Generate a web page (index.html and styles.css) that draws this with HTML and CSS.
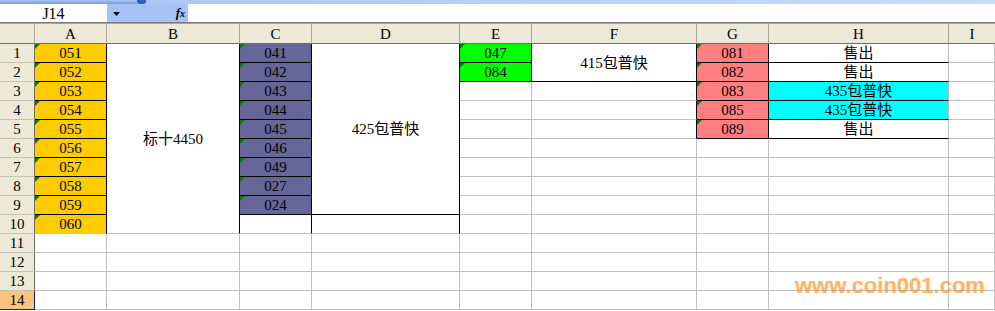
FILE: index.html
```html
<!DOCTYPE html>
<html lang="zh-CN">
<head>
<meta charset="UTF-8">
<title>Sheet1</title>
<link rel="stylesheet" href="styles.css">
</head>
<body>
    <div class="toolbar-edge"><span class="edge-dark"></span><span class="edge-knob"></span></div>
    <div class="formula-bar">
        <div class="name-box">J14</div>
        <div class="fx-zone">
            <svg class="drop" width="7" height="4" viewBox="0 0 7 4"><polygon points="0,0 7,0 3.5,4" fill="#000"/></svg>
            <span class="fx"><i>f<small>x</small></i></span>
        </div>
        <div class="formula-input"></div>
    </div>

    <div class="sheet">
        <!-- column headers -->
        <div class="h corner"></div>
        <div class="h">A</div>
        <div class="h">B</div>
        <div class="h">C</div>
        <div class="h">D</div>
        <div class="h">E</div>
        <div class="h">F</div>
        <div class="h">G</div>
        <div class="h">H</div>
        <div class="h last">I</div>

        <!-- row 1 -->
        <div class="r">1</div>
        <div class="c gold tri bk-r bk-b">051</div>
        <div class="c span10 bk-r">标十4450</div>
        <div class="c slate tri bk-r bk-b">041</div>
        <div class="c span9 bk-r bk-b">425包普快</div>
        <div class="c lime tri bk-r bk-b">047</div>
        <div class="c span2 bk-r bk-b">415包普快</div>
        <div class="c rose tri bk-r bk-b">081</div>
        <div class="c bk-b">售出</div>
        <div class="c"></div>

        <!-- row 2 -->
        <div class="r">2</div>
        <div class="c gold tri bk-r bk-b">052</div>
        <div class="c slate tri bk-r bk-b">042</div>
        <div class="c lime tri bk-r bk-b">084</div>
        <div class="c rose tri bk-r bk-b">082</div>
        <div class="c bk-b">售出</div>
        <div class="c"></div>

        <!-- row 3 -->
        <div class="r">3</div>
        <div class="c gold tri bk-r bk-b">053</div>
        <div class="c slate tri bk-r bk-b">043</div>
        <div class="c"></div>
        <div class="c bk-r"></div>
        <div class="c rose tri bk-r bk-b">083</div>
        <div class="c cyan bk-b">435包普快</div>
        <div class="c"></div>

        <!-- row 4 -->
        <div class="r">4</div>
        <div class="c gold tri bk-r bk-b">054</div>
        <div class="c slate tri bk-r bk-b">044</div>
        <div class="c"></div>
        <div class="c bk-r"></div>
        <div class="c rose tri bk-r bk-b">085</div>
        <div class="c cyan bk-b">435包普快</div>
        <div class="c"></div>

        <!-- row 5 -->
        <div class="r">5</div>
        <div class="c gold tri bk-r bk-b">055</div>
        <div class="c slate tri bk-r bk-b">045</div>
        <div class="c"></div>
        <div class="c bk-r"></div>
        <div class="c rose tri bk-r bk-b">089</div>
        <div class="c bk-b">售出</div>
        <div class="c"></div>

        <!-- row 6 -->
        <div class="r">6</div>
        <div class="c gold tri bk-r bk-b">056</div>
        <div class="c slate tri bk-r bk-b">046</div>
        <div class="c"></div>
        <div class="c"></div>
        <div class="c"></div>
        <div class="c"></div>
        <div class="c"></div>

        <!-- row 7 -->
        <div class="r">7</div>
        <div class="c gold tri bk-r bk-b">057</div>
        <div class="c slate tri bk-r bk-b">049</div>
        <div class="c"></div>
        <div class="c"></div>
        <div class="c"></div>
        <div class="c"></div>
        <div class="c"></div>

        <!-- row 8 -->
        <div class="r">8</div>
        <div class="c gold tri bk-r bk-b">058</div>
        <div class="c slate tri bk-r bk-b">027</div>
        <div class="c"></div>
        <div class="c"></div>
        <div class="c"></div>
        <div class="c"></div>
        <div class="c"></div>

        <!-- row 9 -->
        <div class="r">9</div>
        <div class="c gold tri bk-r bk-b">059</div>
        <div class="c slate tri bk-r bk-b">024</div>
        <div class="c"></div>
        <div class="c"></div>
        <div class="c"></div>
        <div class="c"></div>
        <div class="c"></div>

        <!-- row 10 -->
        <div class="r">10</div>
        <div class="c gold tri bk-r">060</div>
        <div class="c bk-r"></div>
        <div class="c bk-r"></div>
        <div class="c"></div>
        <div class="c"></div>
        <div class="c"></div>
        <div class="c"></div>
        <div class="c"></div>

        <!-- rows 11-14 -->
        <div class="r">11</div>
        <div class="c"></div><div class="c"></div><div class="c"></div><div class="c"></div><div class="c"></div><div class="c"></div><div class="c"></div><div class="c"></div><div class="c"></div>
        <div class="r">12</div>
        <div class="c"></div><div class="c"></div><div class="c"></div><div class="c"></div><div class="c"></div><div class="c"></div><div class="c"></div><div class="c"></div><div class="c"></div>
        <div class="r">13</div>
        <div class="c"></div><div class="c"></div><div class="c"></div><div class="c"></div><div class="c"></div><div class="c"></div><div class="c"></div><div class="c"></div><div class="c"></div>
        <div class="r active">14</div>
        <div class="c"></div><div class="c"></div><div class="c"></div><div class="c"></div><div class="c"></div><div class="c"></div><div class="c"></div><div class="c"></div><div class="c"></div>
    </div>

    <div class="watermark">www.coin001.com</div>
</body>
</html>
```

FILE: styles.css
```css
* {
    box-sizing: border-box;
}
body {
    margin: 0;
    padding: 0;
    width: 995px;
    height: 311px;
    overflow: hidden;
    background-color: #fff;
    font-family: "Liberation Serif", "Noto Sans CJK SC", serif;
    font-size: 15px;
    color: #000;
    position: relative;
}

/* top strip left from the toolbar */
.toolbar-edge {
    height: 4px;
    background: linear-gradient(90deg, #a9c3f3, #c7dbf8);
    display: flex;
}
.toolbar-edge .edge-dark {
    width: 137px;
    height: 4px;
    background: linear-gradient(#a8c2f2, #7c9be0);
}
.toolbar-edge .edge-knob {
    width: 9px;
    height: 4px;
    background-color: #2f5fc4;
    border-radius: 0 0 3px 3px;
}

/* name box + formula */
.formula-bar {
    height: 19px;
    display: flex;
    border-bottom: 1px solid #7a7a7a;
}
.name-box {
    width: 107px;
    background-color: #fff;
    text-align: center;
    line-height: 20px;
    font-size: 16px;
}
.fx-zone {
    width: 81px;
    background-color: #a7c2f4;
    position: relative;
    display: flex;
    align-items: center;
    justify-content: space-between;
    padding: 0 3px 0 6px;
}
.fx-zone .drop {
    margin-top: 1px;
}
.fx-zone .fx {
    font-family: "Liberation Serif", serif;
    font-size: 13px;
    font-weight: bold;
}
.fx-zone .fx small {
    font-size: 10px;
}
.formula-input {
    flex: 1;
    background-color: #fff;
}

/* grid */
.sheet {
    display: grid;
    grid-template-columns: 35px 72px 133px 72px 148px 72px 165px 72px 180px 1fr;
    grid-template-rows: 20px repeat(14, 19px);
    border-top: 1px solid #a5a5a5;
}
.h,
.r,
.c {
    display: flex;
    align-items: flex-end;
    justify-content: center;
    line-height: 14px;
    padding-bottom: 2px;
    white-space: nowrap;
}
.h {
    background-color: #ece9d8;
    border-right: 1px solid #aca899;
    border-bottom: 1px solid #716f64;
}
.h.last {
    border-right: none;
}
.r {
    background-color: #ece9d8;
    border-right: 1px solid #716f64;
    border-bottom: 1px solid #c5c2b2;
}
.r.active {
    background-color: #fbc37f;
    border-right-color: #0a246a;
    border-bottom-color: #0a246a;
}
.c {
    position: relative;
    border-right: 1px solid #c0c0c0;
    border-bottom: 1px solid #c0c0c0;
}
.c.bk-r {
    border-right-color: #000;
}
.c.bk-b {
    border-bottom-color: #000;
}

/* merged cells */
.span10 {
    grid-row: span 10;
}
.span9 {
    grid-row: span 9;
}
.span2 {
    grid-row: span 2;
}
.span10,
.span9,
.span2 {
    align-items: center;
    padding-bottom: 0;
}

/* fills */
.gold {
    background-color: #ffcc00;
}
.slate {
    background-color: #666699;
}
.lime {
    background-color: #00ff00;
}
.rose {
    background-color: #ff8080;
}
.cyan {
    background-color: #00ffff;
}

/* number stored as text marker */
.tri::before {
    content: "";
    position: absolute;
    top: 0;
    left: 0;
    border-top: 5px solid #008000;
    border-right: 5px solid transparent;
}

.watermark {
    position: absolute;
    left: 795px;
    top: 275px;
    font-family: "Liberation Sans", Arial, sans-serif;
    font-weight: bold;
    font-size: 22px;
    line-height: 1;
    color: rgba(255, 150, 40, 0.55);
    text-shadow: 0 0 1px rgba(255, 170, 80, 0.5);
}
```
